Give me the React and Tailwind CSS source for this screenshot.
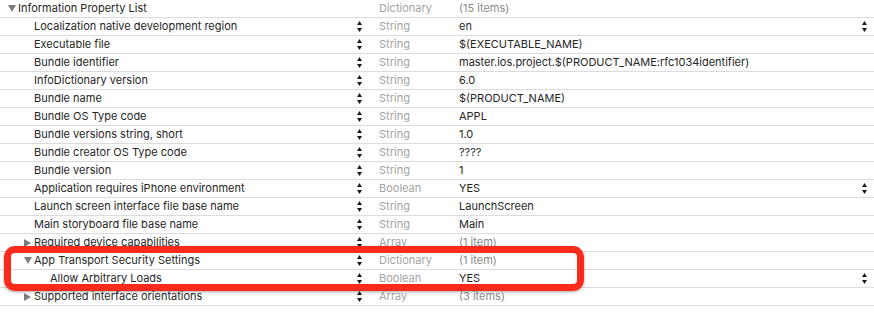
import React from "react";

const rows = [
  { level: 0, key: "Information Property List", disc: "open", type: "Dictionary", value: "(15 items)", vGray: true, stepper: false },
  { level: 1, key: "Localization native development region", type: "String", value: "en", popup: true },
  { level: 1, key: "Executable file", type: "String", value: "$(EXECUTABLE_NAME)" },
  { level: 1, key: "Bundle identifier", type: "String", value: "master.ios.project.$(PRODUCT_NAME:rfc1034identifier)" },
  { level: 1, key: "InfoDictionary version", type: "String", value: "6.0" },
  { level: 1, key: "Bundle name", type: "String", value: "$(PRODUCT_NAME)" },
  { level: 1, key: "Bundle OS Type code", type: "String", value: "APPL" },
  { level: 1, key: "Bundle versions string, short", type: "String", value: "1.0" },
  { level: 1, key: "Bundle creator OS Type code", type: "String", value: "????" },
  { level: 1, key: "Bundle version", type: "String", value: "1" },
  { level: 1, key: "Application requires iPhone environment", type: "Boolean", value: "YES", popup: true },
  { level: 1, key: "Launch screen interface file base name", type: "String", value: "LaunchScreen" },
  { level: 1, key: "Main storyboard file base name", type: "String", value: "Main" },
  { level: 1, key: "Required device capabilities", disc: "closed", type: "Array", value: "(1 item)", vGray: true },
  { level: 1, key: "App Transport Security Settings", disc: "open", type: "Dictionary", value: "(1 item)", vGray: true },
  { level: 2, key: "Allow Arbitrary Loads", type: "Boolean", value: "YES", popup: true },
  { level: 1, key: "Supported interface orientations", disc: "closed", type: "Array", value: "(3 items)", vGray: true },
];

function Stepper() {
  return (
    <svg width="5" height="11" viewBox="0 0 5 11" className="block">
      <polygon points="0,4 2.5,0 5,4" fill="#1a1a1a" />
      <polygon points="0,7 5,7 2.5,11" fill="#1a1a1a" />
    </svg>
  );
}

function Disclosure({ open }) {
  return open ? (
    <svg width="8" height="7" viewBox="0 0 8 7" className="block">
      <polygon points="0,0 8,0 4,7" fill="#7d7d7d" />
    </svg>
  ) : (
    <svg width="7" height="8" viewBox="0 0 7 8" className="block">
      <polygon points="0,0 7,4 0,8" fill="#7d7d7d" />
    </svg>
  );
}

const padClass = ["pl-[8px]", "pl-[24px]", "pl-[40px]"];

export default function App() {
  return (
    <div
      className="relative w-[874px] h-[325px] bg-white overflow-hidden text-[11px] text-[#262626]"
      style={{ fontFamily: "Inter, 'Noto Sans', sans-serif" }}
    >
      {rows.map((r, i) => (
        <div key={i} className="flex items-center h-[18px] border-b border-[#dcdcdc]">
          <div className={`flex items-center w-[355px] ${padClass[r.level]}`}>
            <div className="w-[10px] flex items-center">
              {r.disc ? <Disclosure open={r.disc === "open"} /> : null}
            </div>
            <span className="whitespace-nowrap">{r.key}</span>
          </div>
          <div className="w-[24px] flex items-center pl-[2px]">
            {i > 0 ? <Stepper /> : null}
          </div>
          <div className="w-[80px] text-[#a3a3a3]">{r.type}</div>
          <div className={`flex-1 whitespace-nowrap ${r.vGray ? "text-[#8a8a8a]" : ""}`}>{r.value}</div>
          <div className="w-[19px] flex items-center pl-[7px]">
            {r.popup ? <Stepper /> : null}
          </div>
        </div>
      ))}
      <div className="absolute left-[4px] top-[246px] w-[580px] h-[45px] border-[7px] border-[#fb2b1c] rounded-[11px] shadow-[0_1px_3px_rgba(0,0,0,0.35)]" />
    </div>
  );
}
